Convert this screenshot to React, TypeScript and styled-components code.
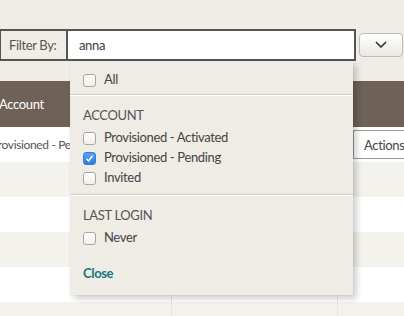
import { createGlobalStyle, styled } from "styled-components";

const GlobalStyle = createGlobalStyle`
  html, body {
    margin: 0;
    padding: 0;
    background-color: #EFEDE6;
    overflow: hidden;
  }
  body {
    font-family: Lato, "Liberation Sans", sans-serif;
    font-size: 13px;
    letter-spacing: -0.35px;
    color: #4A4A4A;
  }
`;

const Page = styled.div`
  width: 404px;
  height: 316px;
  padding-top: 29px;
  box-sizing: border-box;
  position: relative;
  overflow: hidden;
`;

const FilterRow = styled.div`
  display: flex;
  align-items: center;
  position: relative;
`;

const FilterBar = styled.div`
  display: flex;
  width: 353px;
  height: 28px;
  border-top: 2px solid #545454;
  border-bottom: 2px solid #545454;
  border-right: 2px solid #545454;
  border-left: 1px solid #545454;
  box-sizing: content-box;
`;

const FilterLabel = styled.div`
  width: 67px;
  flex-shrink: 0;
  display: flex;
  align-items: center;
  padding-left: 8px;
  box-sizing: border-box;
  border-right: 2px solid #545454;
  color: #555;
  font-size: 13px;
`;

const FilterInput = styled.div`
  flex: 1;
  background: #FFFFFF;
  display: flex;
  align-items: center;
  padding-left: 11px;
  font-size: 13px;
  color: #3A3A3A;
`;

const ToggleButton = styled.button`
  margin-left: 3px;
  width: 44px;
  height: 24px;
  border: 1px solid #BDBBB5;
  border-radius: 4px;
  background: linear-gradient(#FFFFFF, #EAE8E2);
  display: flex;
  align-items: center;
  justify-content: center;
  padding: 0;
  margin-top: -1px;
`;

const Panel = styled.div`
  position: absolute;
  top: 32px;
  left: 70px;
  width: 283px;
  height: 234px;
  background: #EEECE4;
  box-shadow: 4px 4px 6px rgba(0, 0, 0, 0.18), 0 0 1px rgba(0, 0, 0, 0.15);
  box-sizing: border-box;
  z-index: 2;
`;

const Section = styled.div<{ $top: number; $bottom: number; $divider?: boolean }>`
  padding: ${p => p.$top}px 13px ${p => p.$bottom}px;
  border-top: ${p => (p.$divider ? "1px solid #CECCC5" : "none")};
  box-shadow: ${p => (p.$divider ? "inset 0 1px 0 #FFFFFF" : "none")};
`;

const Heading = styled.div`
  height: 20px;
  line-height: 20px;
  margin-bottom: 2px;
  color: #555;
  font-size: 13px;
  text-transform: uppercase;
`;

const Option = styled.label`
  display: flex;
  align-items: center;
  gap: 8px;
  height: 20px;
  color: #444;
  font-size: 13px;
`;

const Box = styled.span<{ $checked?: boolean }>`
  width: 11px;
  height: 11px;
  border-radius: 3px;
  border: 1px solid ${p => (p.$checked ? "#2F7FE0" : "#A9A7A2")};
  background: ${p => (p.$checked ? "linear-gradient(#5AA2F5, #2B7BE4)" : "linear-gradient(#FFFFFF, #F0EFEC)")};
  display: flex;
  align-items: center;
  justify-content: center;
  margin-top: 2px;
`;

const CloseLink = styled.a`
  display: block;
  margin-top: 16px;
  height: 20px;
  line-height: 20px;
  color: #17777F;
  font-weight: bold;
  font-size: 13px;
`;

const Table = styled.div`
  margin-top: 20px;
  margin-left: -9px;
`;

const HeaderRow = styled.div`
  display: grid;
  grid-template-columns: 181px 166px 1fr;
  height: 46px;
  background: #6E6158;
  color: #FFFFFF;
  font-size: 13px;
  align-items: center;
`;

const HeaderCell = styled.div`
  padding-left: 8px;
`;

const Row = styled.div<{ $alt?: boolean }>`
  display: grid;
  grid-template-columns: 181px 166px 1fr;
  height: 35px;
  background: ${p => (p.$alt ? "#F3F2ED" : "#FFFFFF")};
`;

const Cell = styled.div`
  display: flex;
  align-items: center;
  border-right: 1px solid #E8E6E0;
  color: #555;
  font-size: 12px;
  white-space: nowrap;
  overflow: hidden;
  &:last-child {
    border-right: none;
  }
`;

const ActionsButton = styled.div`
  margin-left: 15px;
  height: 27px;
  width: 80px;
  border-top: 1px solid #9A9893;
  border-bottom: 1px solid #9A9893;
  border-left: 1px solid #9A9893;
  background: #FFFFFF;
  display: flex;
  align-items: center;
  padding-left: 10px;
  color: #444;
  font-size: 13px;
`;

const Check = () => (
  <svg width="9" height="9" viewBox="0 0 9 9">
    <polyline points="1.5,4.8 3.6,7 7.5,1.8" fill="none" stroke="#FFFFFF" strokeWidth="1.6" />
  </svg>
);

const Chevron = () => (
  <svg width="12" height="7" viewBox="0 0 12 7">
    <polyline points="1,1 6,6 11,1" fill="none" stroke="#333" strokeWidth="1.6" />
  </svg>
);

const CheckOption = ({ label, checked }: { label: string; checked?: boolean }) => (
  <Option>
    <Box $checked={checked}>{checked && <Check />}</Box>
    {label}
  </Option>
);

const App = () => {
  const rows = [false, true, false, true, false, true];
  return (
    <Page>
      <GlobalStyle />
      <FilterRow>
        <FilterBar>
          <FilterLabel>Filter By:</FilterLabel>
          <FilterInput>anna</FilterInput>
        </FilterBar>
        <ToggleButton>
          <Chevron />
        </ToggleButton>
        <Panel>
          <Section $top={8} $bottom={5}>
            <CheckOption label="All" />
          </Section>
          <Section $top={10} $bottom={7} $divider>
            <Heading>Account</Heading>
            <CheckOption label="Provisioned - Activated" />
            <CheckOption label="Provisioned - Pending" checked />
            <CheckOption label="Invited" />
          </Section>
          <Section $top={10} $bottom={11} $divider>
            <Heading>Last Login</Heading>
            <CheckOption label="Never" />
            <CloseLink>Close</CloseLink>
          </Section>
        </Panel>
      </FilterRow>
      <Table>
        <HeaderRow>
          <HeaderCell>Account</HeaderCell>
          <HeaderCell />
          <HeaderCell />
        </HeaderRow>
        {rows.map((alt, i) => (
          <Row key={i} $alt={alt}>
            <Cell>{i === 0 ? "Provisioned - Pending" : ""}</Cell>
            <Cell />
            <Cell>{i === 0 && <ActionsButton>Actions</ActionsButton>}</Cell>
          </Row>
        ))}
      </Table>
    </Page>
  );
};

export default App;
